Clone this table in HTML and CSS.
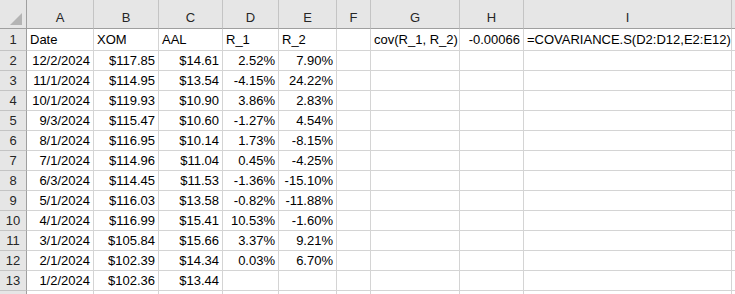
FILE: index.html
```html
<!DOCTYPE html>
<html>
<head>
<meta charset="utf-8">
<link rel="stylesheet" href="styles.css">
</head>
<body>
<div class="sheet">
  <div class="corner"><span class="tri"></span></div>
  <div class="ch">A</div><div class="ch">B</div><div class="ch">C</div><div class="ch">D</div><div class="ch">E</div><div class="ch">F</div><div class="ch">G</div><div class="ch">H</div><div class="ch">I</div><div class="ch last"></div>

  <div class="rh r1">1</div><div class="c r1">Date</div><div class="c r1">XOM</div><div class="c r1">AAL</div><div class="c r1">R_1</div><div class="c r1">R_2</div><div class="c r1"></div><div class="c r1">cov(R_1, R_2)</div><div class="c r1 n">-0.00066</div><div class="c r1">=COVARIANCE.S(D2:D12,E2:E12)</div><div class="c r1 last"></div>

  <div class="rh">2</div><div class="c n">12/2/2024</div><div class="c n">$117.85</div><div class="c n">$14.61</div><div class="c n">2.52%</div><div class="c n">7.90%</div><div class="c"></div><div class="c"></div><div class="c"></div><div class="c"></div><div class="c last"></div>
  <div class="rh">3</div><div class="c n">11/1/2024</div><div class="c n">$114.95</div><div class="c n">$13.54</div><div class="c n">-4.15%</div><div class="c n">24.22%</div><div class="c"></div><div class="c"></div><div class="c"></div><div class="c"></div><div class="c last"></div>
  <div class="rh">4</div><div class="c n">10/1/2024</div><div class="c n">$119.93</div><div class="c n">$10.90</div><div class="c n">3.86%</div><div class="c n">2.83%</div><div class="c"></div><div class="c"></div><div class="c"></div><div class="c"></div><div class="c last"></div>
  <div class="rh">5</div><div class="c n">9/3/2024</div><div class="c n">$115.47</div><div class="c n">$10.60</div><div class="c n">-1.27%</div><div class="c n">4.54%</div><div class="c"></div><div class="c"></div><div class="c"></div><div class="c"></div><div class="c last"></div>
  <div class="rh">6</div><div class="c n">8/1/2024</div><div class="c n">$116.95</div><div class="c n">$10.14</div><div class="c n">1.73%</div><div class="c n">-8.15%</div><div class="c"></div><div class="c"></div><div class="c"></div><div class="c"></div><div class="c last"></div>
  <div class="rh">7</div><div class="c n">7/1/2024</div><div class="c n">$114.96</div><div class="c n">$11.04</div><div class="c n">0.45%</div><div class="c n">-4.25%</div><div class="c"></div><div class="c"></div><div class="c"></div><div class="c"></div><div class="c last"></div>
  <div class="rh">8</div><div class="c n">6/3/2024</div><div class="c n">$114.45</div><div class="c n">$11.53</div><div class="c n">-1.36%</div><div class="c n">-15.10%</div><div class="c"></div><div class="c"></div><div class="c"></div><div class="c"></div><div class="c last"></div>
  <div class="rh">9</div><div class="c n">5/1/2024</div><div class="c n">$116.03</div><div class="c n">$13.58</div><div class="c n">-0.82%</div><div class="c n">-11.88%</div><div class="c"></div><div class="c"></div><div class="c"></div><div class="c"></div><div class="c last"></div>
  <div class="rh">10</div><div class="c n">4/1/2024</div><div class="c n">$116.99</div><div class="c n">$15.41</div><div class="c n">10.53%</div><div class="c n">-1.60%</div><div class="c"></div><div class="c"></div><div class="c"></div><div class="c"></div><div class="c last"></div>
  <div class="rh">11</div><div class="c n">3/1/2024</div><div class="c n">$105.84</div><div class="c n">$15.66</div><div class="c n">3.37%</div><div class="c n">9.21%</div><div class="c"></div><div class="c"></div><div class="c"></div><div class="c"></div><div class="c last"></div>
  <div class="rh">12</div><div class="c n">2/1/2024</div><div class="c n">$102.39</div><div class="c n">$14.34</div><div class="c n">0.03%</div><div class="c n">6.70%</div><div class="c"></div><div class="c"></div><div class="c"></div><div class="c"></div><div class="c last"></div>
  <div class="rh">13</div><div class="c n">1/2/2024</div><div class="c n">$102.36</div><div class="c n">$13.44</div><div class="c"></div><div class="c"></div><div class="c"></div><div class="c"></div><div class="c"></div><div class="c"></div><div class="c last"></div>
  <div class="rh"></div><div class="c"></div><div class="c"></div><div class="c"></div><div class="c"></div><div class="c"></div><div class="c"></div><div class="c"></div><div class="c"></div><div class="c"></div><div class="c last"></div>
</div>
</body>
</html>
```

FILE: styles.css
```css
html, body {
  margin: 0;
  padding: 0;
  background: #ffffff;
  overflow: hidden;
}
.sheet {
  display: grid;
  grid-template-columns: 27px 67px 65px 64px 56px 58px 34px 89px 64px 208px 1fr;
  grid-template-rows: 29px 22px repeat(13, 20px);
  width: 735px;
  height: 294px;
  overflow: hidden;
  font-family: "Liberation Sans", Arial, sans-serif;
  font-size: 13px;
  color: #000;
}
.sheet > div {
  box-sizing: border-box;
  white-space: nowrap;
  overflow: visible;
}
.corner {
  background: #e6e6e6;
  border-right: 1px solid #9f9f9f;
  border-bottom: 1px solid #9f9f9f;
  position: relative;
}
.tri {
  position: absolute;
  left: 10px;
  top: 13px;
  width: 0;
  height: 0;
  border-left: 12px solid transparent;
  border-bottom: 12px solid #b4b4b4;
}
.ch {
  background: #e6e6e6;
  border-right: 1px solid #c4c4c4;
  border-bottom: 1px solid #9f9f9f;
  display: flex;
  align-items: flex-end;
  justify-content: center;
  padding-bottom: 3px;
  color: #262626;
}
.rh {
  background: #e6e6e6;
  border-right: 1px solid #9f9f9f;
  border-bottom: 1px solid #c4c4c4;
  display: flex;
  align-items: flex-end;
  justify-content: center;
  padding-bottom: 2px;
  color: #262626;
}
.c {
  border-right: 1px solid #d4d4d4;
  border-bottom: 1px solid #d4d4d4;
  display: flex;
  align-items: flex-end;
  padding: 0 3px 2px 3px;
}
.c.n {
  justify-content: flex-end;
}
.r1 {
  padding-bottom: 3px;
}
.last {
  border-right: none;
}
```
